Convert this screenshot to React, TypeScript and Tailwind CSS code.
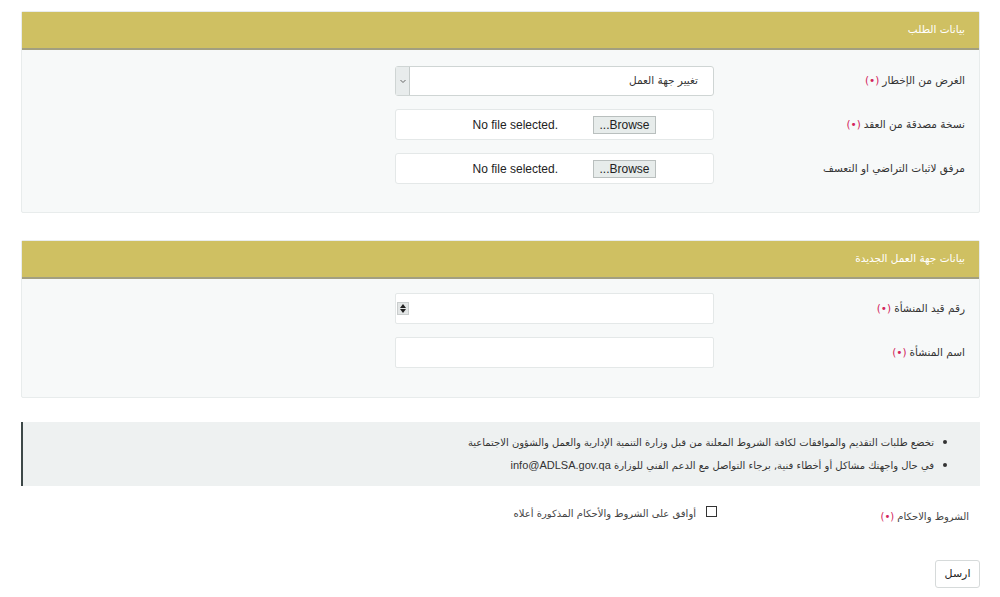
import React from "react";

const arabic = { fontFamily: '"DejaVu Sans", "Noto Sans", sans-serif' };
const latin = { fontFamily: '"Liberation Sans", Arial, sans-serif' };

function Req() {
  return <span className="text-[#d3245c] mr-[3px]">(•)</span>;
}

function Label({ text, req }: { text: string; req?: boolean }) {
  return (
    <div className="w-[265px] shrink-0 pr-[14px] text-[10.5px] text-[#333] tracking-tight">
      {text}
      {req && <Req />}
    </div>
  );
}

function FileBox() {
  return (
    <div className="w-[319px] h-[31px] bg-white border border-[#e4e8e8] rounded-[3px] flex items-center pr-[57px] whitespace-nowrap" style={latin}>
      <div className="h-[18px] w-[63px] shrink-0 bg-[#e7eceb] border border-[#b9bfbe] flex items-center justify-center text-[12px] text-[#222]">
        Browse...
      </div>
      <span dir="ltr" className="mr-[35px] text-[12px] text-[#222]">No file selected.</span>
    </div>
  );
}

function SelectBox() {
  return (
    <div className="w-[319px] h-[30px] bg-white border border-[#cfd5d4] rounded-[3px] flex items-center justify-between">
      <span className="pr-[15px] text-[10.5px] text-[#333]">تغيير جهة العمل</span>
      <div className="h-full w-[14px] bg-[#e8ecec] border-r border-[#c6cccb] flex items-center justify-center">
        <svg width="8" height="6" viewBox="0 0 8 6">
          <path d="M1.5 2 L4 4.5 L6.5 2" fill="none" stroke="#666" strokeWidth="1" />
        </svg>
      </div>
    </div>
  );
}

function NumberBox() {
  return (
    <div className="w-[319px] h-[31px] bg-white border border-[#e4e8e8] rounded-[2px] flex items-center justify-end pl-[1px]">
      <div className="w-[12px] h-[13px] bg-[#e3e6e6] border border-[#c9cdcd] flex flex-col items-center justify-center gap-[1px]">
        <svg width="6" height="4" viewBox="0 0 6 4"><path d="M0 4 L3 0 L6 4 Z" fill="#222" /></svg>
        <svg width="6" height="4" viewBox="0 0 6 4"><path d="M0 0 L3 4 L6 0 Z" fill="#222" /></svg>
      </div>
    </div>
  );
}

function TextBox() {
  return <div className="w-[319px] h-[31px] bg-white border border-[#e4e8e8] rounded-[2px]" />;
}

function Panel({ title, children, className }: { title: string; children: React.ReactNode; className?: string }) {
  return (
    <div className={"bg-[#f7f9f9] border border-[#e8ecec] rounded-[2px] " + (className ?? "")}>
      <div className="h-[38px] bg-[#cfc062] border-b-2 border-[#a29f80] flex items-center pr-[14px] text-white text-[10.5px]">
        {title}
      </div>
      {children}
    </div>
  );
}

function Row({ label, req, children }: { label: string; req?: boolean; children: React.ReactNode }) {
  return (
    <div className="flex items-center">
      <Label text={label} req={req} />
      {children}
    </div>
  );
}

function Bullet({ children }: { children: React.ReactNode }) {
  return (
    <div className="flex items-center gap-[9px]">
      <span className="w-[4px] h-[4px] rounded-full bg-[#333] shrink-0" />
      <span>{children}</span>
    </div>
  );
}

export default function App() {
  return (
    <div dir="rtl" className="w-[1000px] h-[597px] bg-white pt-[11px] pr-[20px] pl-[21px] overflow-hidden" style={arabic}>
      <Panel title="بيانات الطلب">
        <div className="pt-[16px] pb-[28px] flex flex-col gap-[13px]">
          <Row label="الغرض من الإخطار" req>
            <SelectBox />
          </Row>
          <Row label="نسخة مصدقة من العقد" req>
            <FileBox />
          </Row>
          <Row label="مرفق لاثبات التراضي او التعسف">
            <FileBox />
          </Row>
        </div>
      </Panel>

      <Panel title="بيانات جهة العمل الجديدة" className="mt-[27px]">
        <div className="pt-[14px] pb-[29px] flex flex-col gap-[13px]">
          <Row label="رقم قيد المنشأة" req>
            <NumberBox />
          </Row>
          <Row label="اسم المنشأة" req>
            <TextBox />
          </Row>
        </div>
      </Panel>

      <div className="mt-[24px] h-[64px] bg-[#eef1f1] border-l-2 border-[#3d4848] flex flex-col justify-center gap-[7px] pr-[33px] text-[10px] text-[#333]">
        <Bullet>تخضع طلبات التقديم والموافقات لكافة الشروط المعلنة من قبل وزارة التنمية الإدارية والعمل والشؤون الاجتماعية</Bullet>
        <Bullet>
          في حال واجهتك مشاكل أو أخطاء فنية, برجاء التواصل مع الدعم الفني للوزارة{" "}
          <span style={latin} className="text-[11px]">info@ADLSA.gov.qa</span>
        </Bullet>
      </div>

      <div className="mt-[19px] flex items-start h-[20px]">
        <div className="w-[262px] shrink-0 pr-[11px] pt-[4px] text-[10px] text-[#444]">
          الشروط والاحكام
          <Req />
        </div>
        <div className="w-[11px] h-[11px] border border-[#333] bg-white mr-[1px] mt-[1px]" />
        <div className="mr-[10px] text-[10px] text-[#444] mt-[1px]">أوافق على الشروط والأحكام المذكورة أعلاه</div>
      </div>

      <div className="mt-[35px] flex">
        <div className="h-[28px] w-[45px] bg-white border border-[#d6dada] rounded-[3px] flex items-center justify-center text-[11px] text-[#222] font-normal">
          ارسل
        </div>
      </div>
    </div>
  );
}
